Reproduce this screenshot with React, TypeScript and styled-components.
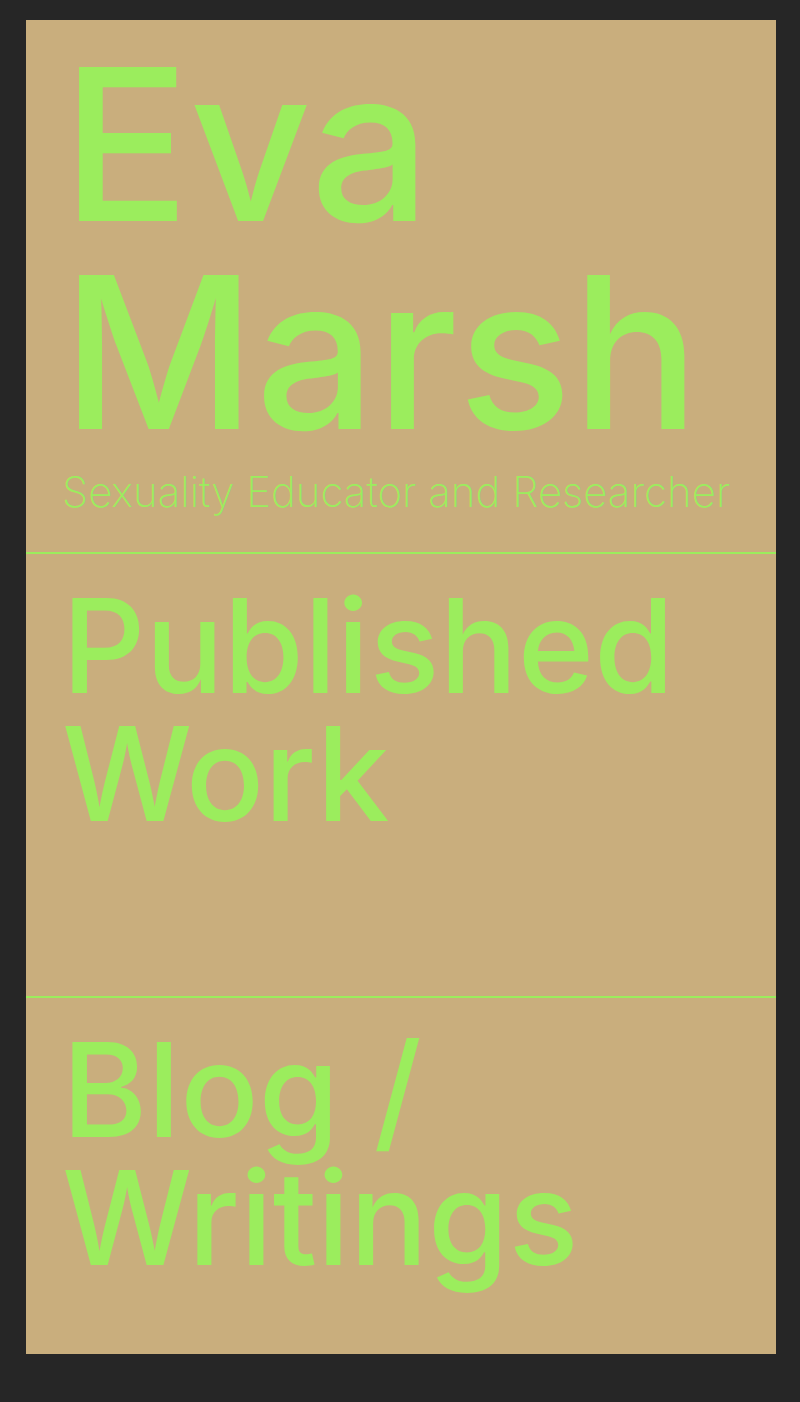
import React from "react";
import styled, { createGlobalStyle } from "styled-components";

const green = "#9bed5d";

const GlobalStyle = createGlobalStyle`
  * { box-sizing: border-box; }
  body {
    margin: 0;
    background: #262626;
    color: ${green};
    font-family: Inter, "Liberation Sans", sans-serif;
  }
`;

const Page = styled.main`
  margin: 20px 24px 48px 26px;
  background: #c9ae7d;
`;

const Header = styled.header`
  padding: 20px 36px 36px;
  border-bottom: 2px solid ${green};
`;

const Name = styled.h1`
  margin: 0;
  font-size: 212px;
  line-height: 208px;
  font-weight: 500;
`;

const Tagline = styled.p`
  margin: 0;
  padding-top: 12px;
  font-size: 42px;
  line-height: 48px;
  font-weight: 200;
`;

const Section = styled.section<{ $minHeight: number }>`
  min-height: ${(p) => p.$minHeight}px;
  padding: 28px 36px;
  & + & {
    border-top: 2px solid ${green};
  }
`;

const Title = styled.h2`
  margin: 0;
  font-size: 130px;
  line-height: 128px;
  font-weight: 500;
`;

export default function App() {
  return (
    <>
      <GlobalStyle />
      <Page>
        <Header>
          <Name>Eva Marsh</Name>
          <Tagline>Sexuality Educator and Researcher</Tagline>
        </Header>
        <Section $minHeight={442}>
          <Title>Published Work</Title>
        </Section>
        <Section $minHeight={358}>
          <Title>Blog / Writings</Title>
        </Section>
      </Page>
    </>
  );
}
